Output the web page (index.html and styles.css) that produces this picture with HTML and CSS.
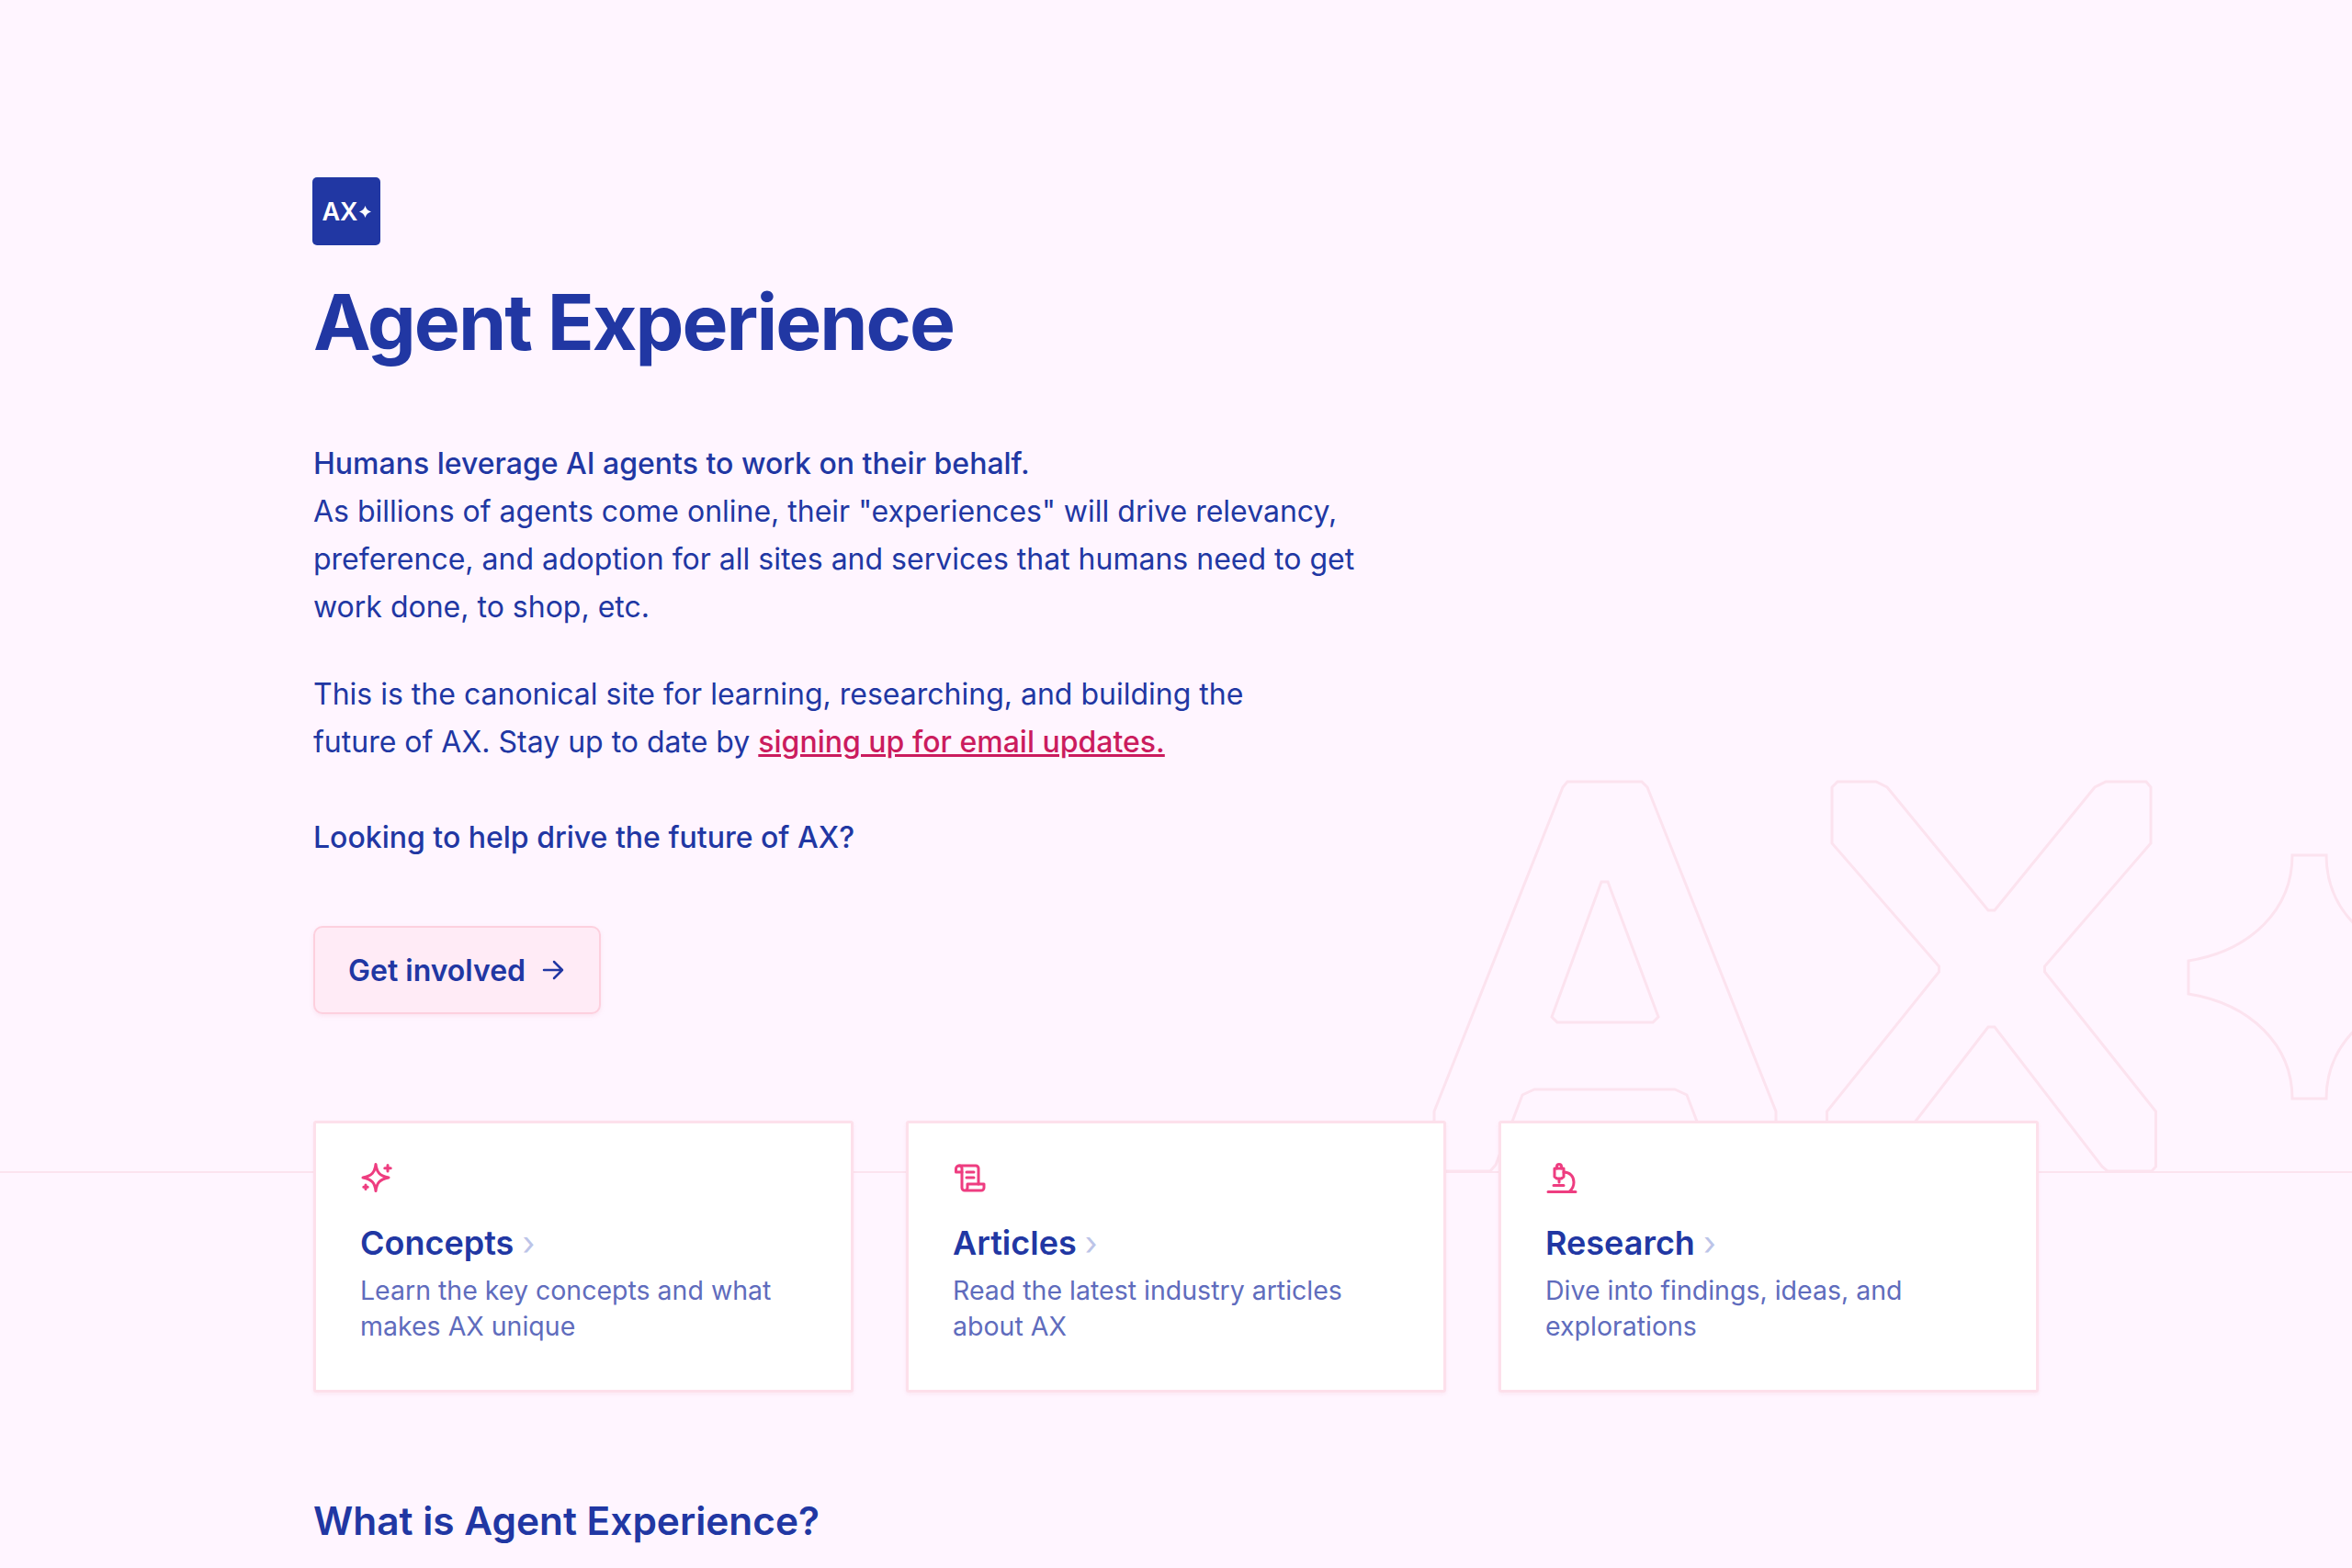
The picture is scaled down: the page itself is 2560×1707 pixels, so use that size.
FILE: index.html
```html
<!DOCTYPE html>
<html lang="en">
<head>
    <meta charset="UTF-8">
    <meta name="viewport" content="width=device-width, initial-scale=1.0">
    <title>Agent Experience</title>
    <link rel="stylesheet" href="styles.css">
</head>
<body>
    <div class="backdrop">
        <svg class="backdrop-mark" viewBox="1500 840 1060 440" aria-hidden="true">
            <path d="M1706 851H1787L1793 857L1933 1210V1268L1927 1275H1871L1865 1268L1836 1192L1823 1186H1670L1657 1192L1628 1268L1622 1275H1567L1561 1268V1210L1701 857Z"/>
            <path d="M1743 960H1750L1805 1107L1799 1113H1695L1689 1107Z"/>
            <path d="M2000 851H2042L2054 857L2164 991H2171L2280 857L2292 851H2336L2341 857V918L2225.500 1052V1058L2346.500 1210V1270L2342 1275H2294L2288 1270L2171 1118H2164L2047 1270L2041 1275H1993L1988.500 1270V1210L2110.500 1058V1052L1994 918V857Z"/>
            <path d="M2495 931H2532C2532 990 2577 1035 2645 1046V1082C2577 1093 2532 1138 2532 1196H2495C2495 1138 2450 1093 2382 1082V1046C2450 1035 2495 990 2495 931Z"/>
        </svg>
    </div>
    <main class="page">
        <div class="logo">AX<svg class="logo-star" viewBox="0 0 12 12"><path d="M6 0C6.800 3 9 5.200 12 6C9 6.800 6.800 9 6 12C5.200 9 3 6.800 0 6C3 5.200 5.200 3 6 0Z"/></svg></div>
        <h1>Agent Experience</h1>
        <div class="intro">
            <p><strong>Humans leverage AI agents to work on their behalf.</strong><br>
            As billions of agents come online, their "experiences" will drive relevancy, preference, and adoption for all sites and services that humans need to get work done, to shop, etc.</p>
            <p>This is the canonical site for learning, researching, and building the<br>
            future of AX. Stay up to date by <a href="#">signing up for email updates.</a></p>
            <p class="callout">Looking to help drive the future of AX?</p>
        </div>
        <a class="button" href="#">Get involved
            <svg viewBox="0 0 24 24" class="button-arrow"><path d="M2 12H22M13 3L22 12L13 21"/></svg>
        </a>
        <div class="cards">
            <a class="card" href="#">
                <svg class="card-icon" viewBox="0 0 36 36">
                    <path d="M17 2.500C18 11 21 15 31 17C21 19 18 23 17 31.500C16 23 13 19 3 17C13 15 16 11 17 2.500Z"/>
                    <path d="M30 3.500V10M26.800 6.800H33.200M6 25V29.500M3.800 27.200H8.200"/>
                </svg>
                <h3>Concepts <span class="chevron">›</span></h3>
                <p>Learn the key concepts and what makes AX unique</p>
            </a>
            <a class="card" href="#">
                <svg class="card-icon" viewBox="0 0 36 36">
                    <path d="M7 4H25A3 3 0 0 1 28 7V24"/>
                    <path d="M7 4A3.500 3.500 0 0 0 3.500 7.500V11H10V7A3 3 0 0 0 7 4"/>
                    <path d="M10 11V28A3 3 0 0 0 13 31H31A3 3 0 0 0 34 28V24H16V28A3 3 0 0 1 13 31"/>
                    <path d="M15 11H23M15 17H23"/>
                </svg>
                <h3>Articles <span class="chevron">›</span></h3>
                <p>Read the latest industry articles about AX</p>
            </a>
            <a class="card" href="#">
                <svg class="card-icon" viewBox="0 0 36 36">
                    <path d="M12.500 7V5A2.500 2.500 0 0 1 17.500 5V7"/>
                    <path d="M10 7H20V16L17.500 18H12.500L10 16ZM15 18V22"/>
                    <path d="M20 11C27 11 31 16 31 22C31 27 29 30 26 32.500"/>
                    <path d="M3 32.500H33M9 25.500H20"/>
                </svg>
                <h3>Research <span class="chevron">›</span></h3>
                <p>Dive into findings, ideas, and explorations</p>
            </a>
        </div>
        <h2>What is Agent Experience?</h2>
    </main>
</body>
</html>
```

FILE: styles.css
```css
/* General Reset */
* {
    margin: 0;
    padding: 0;
    box-sizing: border-box;
}
html, body {
    height: 1707px;
    overflow: hidden;
}
body {
    font-family: 'Inter', sans-serif;
    background-color: #fff5ff;
    color: #2137a3;
    position: relative;
}
a {
    color: inherit;
    text-decoration: none;
}

/* Outline mark behind the hero */
.backdrop {
    position: absolute;
    top: 0;
    left: 0;
    right: 0;
    height: 1277px;
    border-bottom: 2px solid #fce3ef;
}
.backdrop-mark {
    position: absolute;
    right: 0;
    bottom: -5px;
    width: 1060px;
    height: 440px;
    fill: none;
    stroke: #fce3ef;
    stroke-width: 3;
}

.page {
    position: relative;
    padding: 193px 341px 0 341px;
}
.logo {
    width: 74px;
    height: 74px;
    margin-left: -1px;
    border-radius: 5px;
    background: #2137a3;
    color: #fff;
    font-size: 27px;
    font-weight: 600;
    display: flex;
    align-items: center;
    justify-content: center;
    gap: 1px;
}
.logo-star {
    width: 13px;
    height: 13px;
    fill: #fff;
}
h1 {
    font-size: 84px;
    font-weight: 700;
    line-height: 100px;
    letter-spacing: -2px;
    margin-top: 34px;
}
.intro {
    max-width: 1150px;
    margin-top: 78px;
    font-size: 32px;
    line-height: 52px;
}
.intro p {
    margin-bottom: 43px;
}
.intro strong {
    font-weight: 500;
}
.intro a {
    color: #cb1c5e;
    font-weight: 500;
    text-decoration: underline;
}
.intro .callout {
    font-weight: 500;
    margin-top: 52px;
    margin-bottom: 0;
}
.button {
    display: inline-flex;
    align-items: center;
    gap: 18px;
    height: 96px;
    margin-top: 70px;
    padding: 0 38px 0 36px;
    font-size: 32px;
    font-weight: 600;
    background: #ffebf6;
    border: 2px solid #fdd0de;
    border-radius: 10px;
    box-shadow: 0 2px 4px rgba(240, 180, 200, 0.25);
}
.button-arrow {
    width: 24px;
    height: 24px;
    fill: none;
    stroke: currentColor;
    stroke-width: 2.500;
    stroke-linecap: round;
    stroke-linejoin: round;
}
.cards {
    display: grid;
    grid-template-columns: repeat(3, 1fr);
    gap: 57px;
    margin-top: 116px;
}
.card {
    display: block;
    height: 296px;
    padding: 42px 48px 0;
    background: #fff;
    border: 3px solid #fde0eb;
    border-radius: 3px;
    box-shadow: 0 2px 4px rgba(240, 180, 200, 0.2);
}
.card-icon {
    display: block;
    width: 36px;
    height: 36px;
    fill: none;
    stroke: #ee3d80;
    stroke-width: 3;
    stroke-linecap: round;
    stroke-linejoin: round;
}
.card h3 {
    font-size: 36px;
    font-weight: 600;
    line-height: 44px;
    margin-top: 30px;
}
.chevron {
    color: #bcc4e8;
    font-weight: 400;
}
.card p {
    font-size: 28.500px;
    line-height: 39px;
    margin-top: 10px;
    color: #5f6cbd;
}
h2 {
    font-size: 42.400px;
    font-weight: 600;
    line-height: 56px;
    margin-top: 112px;
}
```
